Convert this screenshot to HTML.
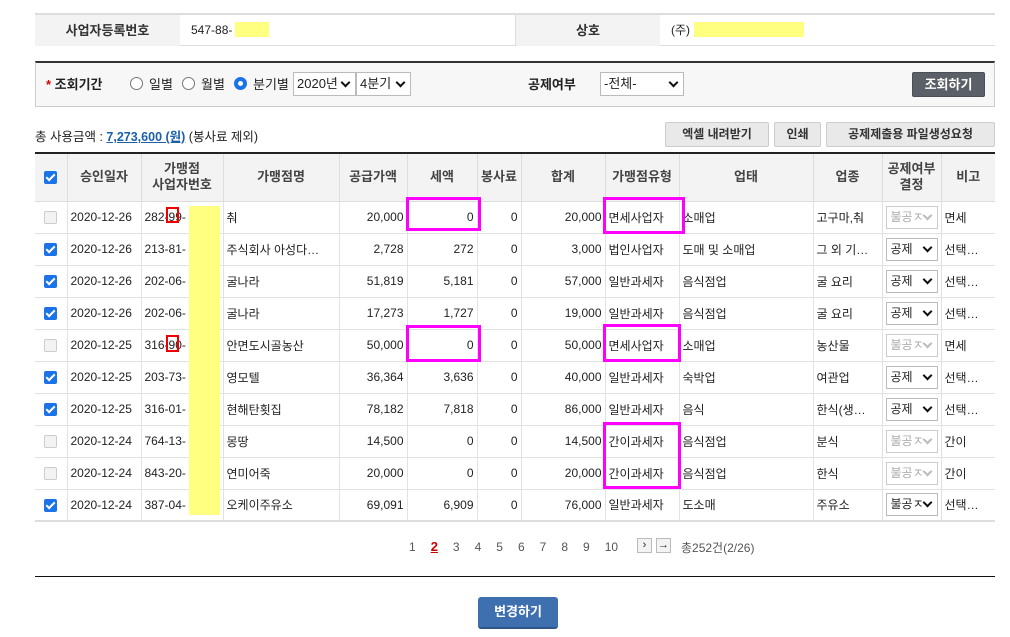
<!DOCTYPE html>
<html><head><meta charset="utf-8"><style>
*{box-sizing:border-box;margin:0;padding:0}
body{width:1010px;height:637px;background:#fff;font-family:"Liberation Sans","Noto Sans CJK KR",sans-serif;font-size:12px;color:#222;position:relative;overflow:hidden}
.a{position:absolute}
.info{left:35px;top:13px;width:960px;height:33px;border-top:2px solid #ddd;border-bottom:1px solid #ddd}
.info div{position:absolute;top:0;height:31px;line-height:31px}
.lab{background:#f3f3f3;font-weight:bold;font-size:13px;text-align:center;color:#333}
.yel{background:#ffff80}
.search{left:35px;top:61px;width:960px;height:46px;border:1px solid #ccc;border-top:2px solid #333;background:#f7f7f7}
.sel{position:absolute;background:#fff;border:1px solid #bbb;height:24px;line-height:22px;padding-left:3px;font-size:12px}
.sel:after{content:"";position:absolute;right:6px;top:6px;width:5px;height:5px;border-right:2px solid #111;border-bottom:2px solid #111;transform:rotate(45deg)}
.radio{position:absolute;width:13px;height:13px;border:1px solid #777;border-radius:50%;background:#fff}
.btn{position:absolute;height:25px;line-height:23px;border:1px solid #ccc;background:#e9e9e9;font-weight:bold;font-size:12px;text-align:center;color:#333;border-radius:2px}
table{position:absolute;left:35px;top:152px;width:960px;border-collapse:collapse;table-layout:fixed;border-top:2px solid #222;border-bottom:2px solid #ddd}
th{background:#f3f3f3;height:48px;font-size:13px;font-weight:bold;color:#444;border:1px solid #ddd;border-top:0;line-height:16px}
td{height:32px;border:1px solid #e2e2e2;padding:0 3px;white-space:nowrap;overflow:hidden;font-size:12px}
th:first-child,td:first-child{border-left:0}th:last-child,td:last-child{border-right:0}
.r{text-align:right}.c{text-align:center}
.cb{display:inline-block;width:13px;height:13px;border-radius:2px;vertical-align:middle}
.on{background:#1a73e8;position:relative}
.on:after{content:"";position:absolute;left:4px;top:1px;width:3px;height:7px;border-right:2px solid #fff;border-bottom:2px solid #fff;transform:rotate(45deg)}
.off{border:1px solid #ccc;background:#f3f3f3}
.ds{display:inline-block;position:relative;width:52px;height:23px;border:1px solid #bbb;line-height:21px;padding-left:4px;background:#fff;vertical-align:middle}
.ds:after{content:"";position:absolute;right:6px;top:5px;width:5px;height:5px;border-right:2px solid #111;border-bottom:2px solid #111;transform:rotate(45deg)}
.ds.dis{color:#aaa;border-color:#ccc}.ds.dis:after{border-color:#bbb}
.mg{position:absolute;border:3px solid #f0f}
.rd{position:absolute;border:2px solid #e00}
.pg span,.pg b{display:inline-block;margin-right:15px}
</style></head><body>
<div class="a info">
<div class="lab" style="left:0;width:145px">사업자등록번호</div>
<div style="left:156px">547-88-</div><div class="yel" style="left:200px;top:7px;height:15px;width:34px"></div>
<div class="lab" style="left:480px;width:145px;border-left:1px solid #ddd">상호</div>
<div style="left:636px">(주)</div><div class="yel" style="left:659px;top:7px;height:15px;width:110px"></div>
</div>
<div class="a search">
<span class="a" style="left:10px;top:11px;font-size:13px;font-weight:bold"><span style="color:#d00">*</span> 조회기간</span>
<div class="radio" style="left:94px;top:14px"></div><span class="a" style="left:113px;top:11px;font-size:13px">일별</span>
<div class="radio" style="left:146px;top:14px"></div><span class="a" style="left:165px;top:11px;font-size:13px">월별</span>
<div class="radio" style="left:198px;top:14px;border:4px solid #1a73e8;box-shadow:inset 0 0 0 1px #fff"></div><span class="a" style="left:217px;top:11px;font-size:13px">분기별</span>
<div class="sel" style="left:257px;top:9px;width:63px;font-size:13px">2020년</div>
<div class="sel" style="left:320px;top:9px;width:55px;font-size:13px">4분기</div>
<span class="a" style="left:492px;top:11px;font-size:13px;font-weight:bold">공제여부</span>
<div class="sel" style="left:564px;top:9px;width:84px;font-size:13px">-전체-</div>
<div class="btn" style="left:876px;top:9px;width:73px;height:25px;background:#5b6068;color:#fff;border-color:#4a4e55;font-size:13px">조회하기</div>
</div>
<div class="a" style="left:35px;top:126px;font-size:12.5px">총 사용금액 : <b style="color:#1a5fa8;text-decoration:underline">7,273,600 (원)</b> (봉사료 제외)</div>
<div class="btn" style="left:665px;top:122px;width:104px">엑셀 내려받기</div>
<div class="btn" style="left:774px;top:122px;width:47px">인쇄</div>
<div class="btn" style="left:826px;top:122px;width:169px">공제제출용 파일생성요청</div>
<table>
<colgroup><col style="width:32px"><col style="width:74px"><col style="width:82px"><col style="width:116px"><col style="width:68px"><col style="width:70px"><col style="width:44px"><col style="width:84px"><col style="width:74px"><col style="width:134px"><col style="width:69px"><col style="width:59px"><col style="width:54px"></colgroup>
<tr><th><span class="cb on"></span></th><th>승인일자</th><th>가맹점<br>사업자번호</th><th>가맹점명</th><th>공급가액</th><th>세액</th><th>봉사료</th><th>합계</th><th>가맹점유형</th><th>업태</th><th>업종</th><th>공제여부<br>결정</th><th>비고</th></tr>
<tr><td class="c"><span class="cb off"></span></td><td>2020-12-26</td><td>282-99-</td><td>춰</td><td class="r">20,000</td><td class="r">0</td><td class="r">0</td><td class="r">20,000</td><td>면세사업자</td><td>소매업</td><td>고구마,춰</td><td><span class="ds dis">불공ㅈ</span></td><td>면세</td></tr>
<tr><td class="c"><span class="cb on"></span></td><td>2020-12-26</td><td>213-81-</td><td>주식회사 아성다…</td><td class="r">2,728</td><td class="r">272</td><td class="r">0</td><td class="r">3,000</td><td>법인사업자</td><td>도매 및 소매업</td><td>그 외 기…</td><td><span class="ds">공제</span></td><td>선택…</td></tr>
<tr><td class="c"><span class="cb on"></span></td><td>2020-12-26</td><td>202-06-</td><td>굴나라</td><td class="r">51,819</td><td class="r">5,181</td><td class="r">0</td><td class="r">57,000</td><td>일반과세자</td><td>음식점업</td><td>굴 요리</td><td><span class="ds">공제</span></td><td>선택…</td></tr>
<tr><td class="c"><span class="cb on"></span></td><td>2020-12-26</td><td>202-06-</td><td>굴나라</td><td class="r">17,273</td><td class="r">1,727</td><td class="r">0</td><td class="r">19,000</td><td>일반과세자</td><td>음식점업</td><td>굴 요리</td><td><span class="ds">공제</span></td><td>선택…</td></tr>
<tr><td class="c"><span class="cb off"></span></td><td>2020-12-25</td><td>316-90-</td><td>안면도시골농산</td><td class="r">50,000</td><td class="r">0</td><td class="r">0</td><td class="r">50,000</td><td>면세사업자</td><td>소매업</td><td>농산물</td><td><span class="ds dis">불공ㅈ</span></td><td>면세</td></tr>
<tr><td class="c"><span class="cb on"></span></td><td>2020-12-25</td><td>203-73-</td><td>영모텔</td><td class="r">36,364</td><td class="r">3,636</td><td class="r">0</td><td class="r">40,000</td><td>일반과세자</td><td>숙박업</td><td>여관업</td><td><span class="ds">공제</span></td><td>선택…</td></tr>
<tr><td class="c"><span class="cb on"></span></td><td>2020-12-25</td><td>316-01-</td><td>현해탄횟집</td><td class="r">78,182</td><td class="r">7,818</td><td class="r">0</td><td class="r">86,000</td><td>일반과세자</td><td>음식</td><td>한식(생…</td><td><span class="ds">공제</span></td><td>선택…</td></tr>
<tr><td class="c"><span class="cb off"></span></td><td>2020-12-24</td><td>764-13-</td><td>몽땅</td><td class="r">14,500</td><td class="r">0</td><td class="r">0</td><td class="r">14,500</td><td>간이과세자</td><td>음식점업</td><td>분식</td><td><span class="ds dis">불공ㅈ</span></td><td>간이</td></tr>
<tr><td class="c"><span class="cb off"></span></td><td>2020-12-24</td><td>843-20-</td><td>연미어죽</td><td class="r">20,000</td><td class="r">0</td><td class="r">0</td><td class="r">20,000</td><td>간이과세자</td><td>음식점업</td><td>한식</td><td><span class="ds dis">불공ㅈ</span></td><td>간이</td></tr>
<tr><td class="c"><span class="cb on"></span></td><td>2020-12-24</td><td>387-04-</td><td>오케이주유소</td><td class="r">69,091</td><td class="r">6,909</td><td class="r">0</td><td class="r">76,000</td><td>일반과세자</td><td>도소매</td><td>주유소</td><td><span class="ds">불공ㅈ</span></td><td>선택…</td></tr>
</table>
<div class="a yel" style="left:189px;top:206px;width:31px;height:309px"></div>
<div class="rd" style="left:166px;top:207px;width:13px;height:16px"></div>
<div class="rd" style="left:166px;top:335px;width:13px;height:17px"></div>
<div class="mg" style="left:406px;top:197px;width:75px;height:34px"></div>
<div class="mg" style="left:603px;top:197px;width:82px;height:37px"></div>
<div class="mg" style="left:406px;top:325px;width:75px;height:37px"></div>
<div class="mg" style="left:603px;top:324px;width:78px;height:38px"></div>
<div class="mg" style="left:603px;top:422px;width:78px;height:67px"></div>
<div class="a pg" style="left:409px;top:539px;color:#555;white-space:nowrap">
<span>1</span><b style="color:#c00;text-decoration:underline;font-size:13px">2</b><span>3</span><span>4</span><span>5</span><span>6</span><span>7</span><span>8</span><span>9</span><span>10</span></div>
<div class="a" style="left:637px;top:538px;width:15px;height:15px;border:1px solid #bbb;background:#f3f3f3;font-size:11px;text-align:center;line-height:13px">›</div>
<div class="a" style="left:656px;top:538px;width:15px;height:15px;border:1px solid #bbb;background:#f3f3f3;font-size:11px;text-align:center;line-height:13px">→</div>
<div class="a" style="left:681px;top:539px;color:#555">총252건(2/26)</div>
<div class="a" style="left:35px;top:576px;width:960px;height:1px;background:#111"></div>
<div class="a" style="left:478px;top:597px;width:80px;height:32px;background:#3e6fae;border-radius:3px;border-bottom:2px solid #2f5688;color:#fff;font-weight:bold;font-size:13px;text-align:center;line-height:30px">변경하기</div>
</body></html>
